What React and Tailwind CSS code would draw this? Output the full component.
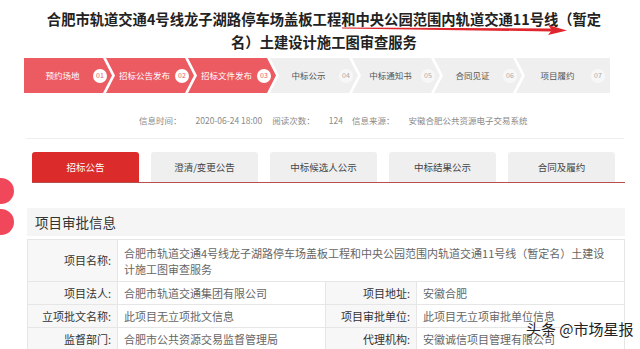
export default function App() {
  const steps = [
    { label: "预约场地", no: "01", done: true },
    { label: "招标公告发布", no: "02", done: true },
    { label: "招标文件发布", no: "03", done: true },
    { label: "中标公示", no: "04", done: false },
    { label: "中标通知书", no: "05", done: false },
    { label: "合同见证", no: "06", done: false },
    { label: "项目履约", no: "07", done: false },
  ];

  const tabs = ["招标公告", "澄清/变更公告", "中标候选人公示", "中标结果公示", "合同及履约"];

  return (
    <div
      className="relative w-[640px] h-[349px] overflow-hidden bg-white"
      style={{ fontFamily: '"Noto Sans CJK SC", "Noto Sans", sans-serif' }}
    >
      <div className="pl-[24px] pr-[16px]">
        {/* Title */}
        <div className="relative pt-[7px] text-center text-[14.3px] font-bold leading-[23px] text-[#222]">
          <div>合肥市轨道交通4号线龙子湖路停车场盖板工程和中央公园范围内轨道交通11号线（暂定</div>
          <div>名）土建设计施工图审查服务</div>
          <svg className="absolute left-[318px] top-[24px]" width="226" height="12" viewBox="0 0 226 12">
            <path d="M0 3.5 L210 4.5 L210 7.5 L0 4.5 Z" fill="#e0262c" />
            <path d="M206 1 L225 6.5 L206 11 L210 6 Z" fill="#e0262c" />
          </svg>
        </div>

        {/* Steps */}
        <div className="mt-[5px] flex h-[35px]">
          {steps.map((s, i) => (
            <div
              key={s.no}
              className={
                (i === 0
                  ? "w-[88px] [clip-path:polygon(0_0,calc(100%-9px)_0,100%_50%,calc(100%-9px)_100%,0_100%)] "
                  : i === steps.length - 1
                  ? "ml-[-6px] w-[94px] [clip-path:polygon(0_0,100%_0,100%_100%,0_100%,9px_50%)] "
                  : "ml-[-6px] w-[88px] [clip-path:polygon(0_0,calc(100%-9px)_0,100%_50%,calc(100%-9px)_100%,0_100%,9px_50%)] ") +
                (s.done ? "bg-[#ec5a62] text-white" : "bg-[#efefef] text-[#555]") +
                " flex h-full items-center pl-[12px] pr-[5px]"
              }
            >
              <span className="flex-1 whitespace-nowrap text-center text-[8.5px]">{s.label}</span>
              <span
                className={
                  s.done
                    ? "ml-[4px] flex h-[14px] w-[14px] items-center justify-center rounded-full bg-white text-[7px] text-[#ec5a62]"
                    : "ml-[4px] flex h-[14px] w-[14px] items-center justify-center rounded-full bg-[#f7f7f7] text-[7px] text-[#aaa]"
                }
              >
                {s.no}
              </span>
            </div>
          ))}
        </div>

        {/* Info line */}
        <div className="mt-[20px] flex h-[14px] items-center pl-[115px] text-[8.5px] text-[#8a8a8a]">
          <span>信息时间：</span>
          <span className="ml-[14px]">2020-06-24 18:00</span>
          <span className="ml-[10px]">阅读次数：</span>
          <span className="ml-[14px]">124</span>
          <span className="ml-[9px]">信息来源：</span>
          <span className="ml-[14px]">安徽合肥公共资源电子交易系统</span>
        </div>

        <div className="ml-[2px] mt-[11px] h-px bg-[#eeeeee]" />

        {/* Tabs */}
        <div className="ml-[8px] mr-[-1px] mt-[13px] flex h-[31px] gap-[12px] border-b border-[#b5504c]">
          {tabs.map((t, i) => (
            <div
              key={t}
              className={
                i === 0
                  ? "flex w-[107px] items-center justify-center rounded-t-[3px] bg-[#dc2b2b] text-[9.5px] text-white"
                  : "flex w-[107px] items-center justify-center rounded-t-[3px] bg-[#efefef] text-[9.5px] text-[#444]"
              }
            >
              {t}
            </div>
          ))}
        </div>

        {/* Section header */}
        <div className="ml-[3px] mr-[-1px] mt-[25px] flex h-[28px] items-center bg-[#f5f5f5] pl-[8px] text-[13.5px] text-[#333]">
          项目审批信息
        </div>

        {/* Table */}
        <div className="ml-[3px] mr-[-1px] mt-[3px] grid grid-cols-[90px_208px_91px_1fr] border-l border-t border-[#e6e6e6] text-[11px]">
          <div className="flex h-[42px] items-center justify-end border-b border-r border-[#e6e6e6] bg-[#f7f7f7] pr-[6px] text-[#333]">
            项目名称:
          </div>
          <div className="col-span-3 flex h-[42px] flex-col justify-center border-b border-r border-[#e6e6e6] px-[6px] leading-[16px] text-[#666]">
            <span className="whitespace-nowrap">合肥市轨道交通4号线龙子湖路停车场盖板工程和中央公园范围内轨道交通11号线（暂定名）土建设</span>
            <span>计施工图审查服务</span>
          </div>

          <Label>项目法人:</Label>
          <Value>合肥市轨道交通集团有限公司</Value>
          <Label>项目地址:</Label>
          <Value>安徽合肥</Value>

          <Label>立项批文名称:</Label>
          <Value>此项目无立项批文信息</Value>
          <Label>项目审批单位:</Label>
          <Value>此项目无立项审批单位信息</Value>

          <Label>监督部门:</Label>
          <Value>合肥市公共资源交易监督管理局</Value>
          <Label>代理机构:</Label>
          <Value>安徽诚信项目管理有限公司</Value>
        </div>
      </div>

      {/* Left side red dots */}
      <div className="absolute left-[-12px] top-[178px] h-[26px] w-[26px] rounded-full bg-[#f1475a]" />
      <div className="absolute left-[-12px] top-[209px] h-[26px] w-[26px] rounded-full bg-[#f1475a]" />

      {/* Watermark */}
      <div className="absolute left-[526px] top-[319px] whitespace-nowrap text-[15px] leading-[20px] text-[#222] [text-shadow:0_0_2px_#fff]">
        头条 @市场星报
      </div>
    </div>
  );
}

function Label({ children }) {
  return (
    <div className="flex h-[23px] items-center justify-end whitespace-nowrap border-b border-r border-[#e6e6e6] bg-[#f7f7f7] pr-[6px] text-[#333]">
      {children}
    </div>
  );
}

function Value({ children }) {
  return (
    <div className="flex h-[23px] items-center whitespace-nowrap border-b border-r border-[#e6e6e6] px-[6px] text-[#666]">
      {children}
    </div>
  );
}
